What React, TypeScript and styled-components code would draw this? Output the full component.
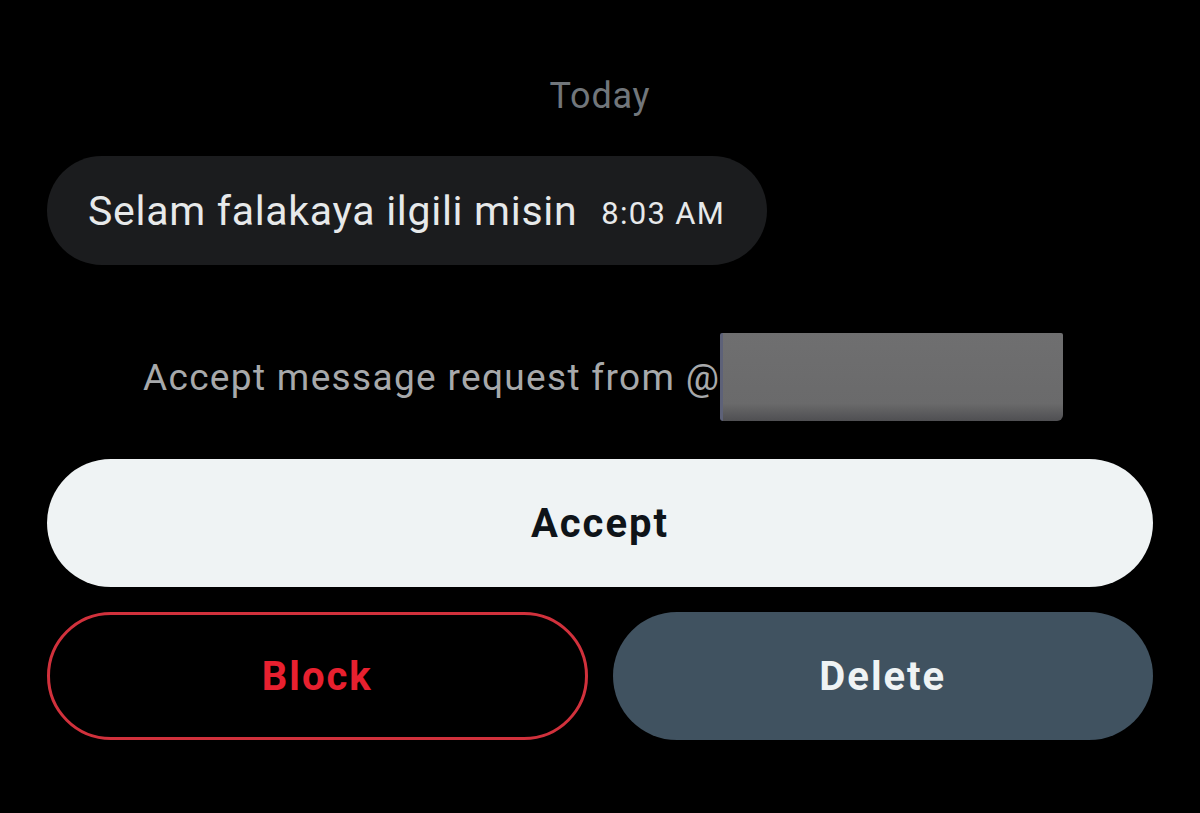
import React from "react";
import styled, { createGlobalStyle } from "styled-components";

const Global = createGlobalStyle`
  html, body { margin: 0; padding: 0; background: #000; }
  body { font-family: Roboto, "Noto Sans", "Liberation Sans", sans-serif; }
  #root { min-height: 813px; }
`;

const Page = styled.main`
  width: 1200px;
  height: 813px;
  box-sizing: border-box;
  padding: 0 47px;
  background: #000;
  display: flex;
  flex-direction: column;
`;

const DateLabel = styled.div`
  margin-top: 74px;
  height: 44px;
  line-height: 44px;
  text-align: center;
  color: #71767b;
  font-size: 36px;
  letter-spacing: 0.8px;
`;

const Bubble = styled.div`
  margin-top: 38px;
  align-self: flex-start;
  height: 109px;
  box-sizing: border-box;
  padding: 0 42px 0 41px;
  border-radius: 55px;
  background: #1b1c1e;
  display: flex;
  align-items: center;
  gap: 24px;
`;

const BubbleText = styled.span`
  color: #e7e9ea;
  font-size: 41px;
  letter-spacing: 0.7px;
`;

const Time = styled.span`
  color: #e7e9ea;
  font-size: 31px;
  letter-spacing: 1.3px;
  margin-top: 6px;
`;

const RequestRow = styled.div`
  margin-top: 67px;
  height: 88px;
  padding-left: 96px;
  display: flex;
  align-items: center;
`;

const RequestText = styled.span`
  color: #a7a9ab;
  font-size: 37px;
  letter-spacing: 1.33px;
  margin-top: 2px;
`;

const Redaction = styled.span`
  width: 343px;
  height: 88px;
  margin-top: 2px;
  background: linear-gradient(180deg, #6f6f70 0%, #6a6a6b 80%, #4f4f52 100%);
  border-left: 3px solid #5d6178;
  box-sizing: border-box;
  border-radius: 2px 2px 6px 3px;
`;

const Pill = styled.button<{ $variant: "accept" | "block" | "delete" }>`
  height: 128px;
  border-radius: 64px;
  box-sizing: border-box;
  font-family: Roboto, "Noto Sans", "Liberation Sans", sans-serif;
  font-weight: 700;
  font-size: 40px;
  letter-spacing: 2px;
  display: flex;
  align-items: center;
  justify-content: center;
  cursor: pointer;
  padding: 0;
  border: ${(p) => (p.$variant === "block" ? "3px solid #d1313c" : "none")};
  background: ${(p) =>
    p.$variant === "accept" ? "#eff3f4" : p.$variant === "delete" ? "#405260" : "#000"};
  color: ${(p) =>
    p.$variant === "accept" ? "#0f1419" : p.$variant === "delete" ? "#eff3f4" : "#e8202f"};
`;

const AcceptWrap = styled.div`
  margin-top: 39px;
  display: flex;
  flex-direction: column;
`;

const ButtonRow = styled.div`
  margin-top: 25px;
  display: grid;
  grid-template-columns: 1fr 1fr;
  gap: 25px;
`;

export default function App() {
  return (
    <>
      <Global />
      <Page>
        <DateLabel>Today</DateLabel>
        <Bubble>
          <BubbleText>Selam falakaya ilgili misin</BubbleText>
          <Time>8:03 AM</Time>
        </Bubble>
        <RequestRow>
          <RequestText>Accept message request from @</RequestText>
          <Redaction />
        </RequestRow>
        <AcceptWrap>
          <Pill $variant="accept">Accept</Pill>
        </AcceptWrap>
        <ButtonRow>
          <Pill $variant="block">Block</Pill>
          <Pill $variant="delete">Delete</Pill>
        </ButtonRow>
      </Page>
    </>
  );
}
